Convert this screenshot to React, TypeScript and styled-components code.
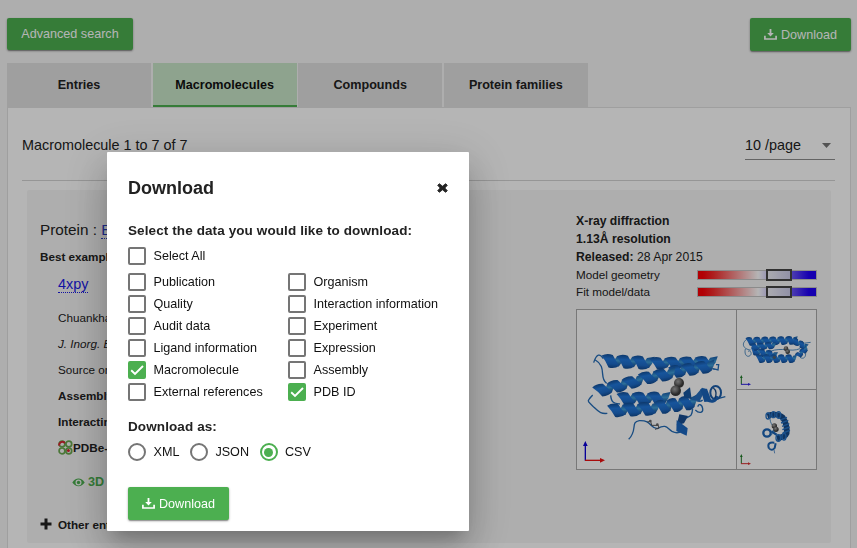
import React from 'react';
import styled, { createGlobalStyle, css } from 'styled-components';

const GlobalStyle = createGlobalStyle`
  * { box-sizing: border-box; }
  body {
    margin: 0;
    background: #f6f6f6;
    color: #222;
    font-family: "Liberation Sans", Arial, sans-serif;
    font-size: 12.6px;
    overflow: hidden;
  }
`;

const Page = styled.main`
  height: 548px;
  padding: 18px 6px 0 7px;
  overflow: hidden;
`;

const Toolbar = styled.header`
  display: flex;
  justify-content: space-between;
  align-items: flex-start;
  height: 45px;
`;

const Button = styled.button<{ $height?: number; $width: number }>`
  display: inline-flex;
  align-items: center;
  justify-content: center;
  gap: 4px;
  width: ${p => p.$width}px;
  height: ${p => p.$height ?? 33}px;
  padding: 0;
  border: 0;
  border-radius: 2px;
  background: #4caf50;
  color: #fff;
  font: 12.6px "Liberation Sans", Arial, sans-serif;
  white-space: nowrap;
  box-shadow: 0 2px 1px -1px rgba(0, 0, 0, 0.2), 0 1px 2px rgba(0, 0, 0, 0.24), 0 1px 3px rgba(0, 0, 0, 0.14);
`;

const Tabs = styled.nav`
  display: flex;
  gap: 1.6px;
  height: 44px;
`;

const Tab = styled.a<{ $active?: boolean }>`
  display: flex;
  align-items: center;
  justify-content: center;
  width: 144px;
  background: #e1e1e1;
  font-weight: bold;
  ${p => p.$active && css`
    background: #c8e6c9;
    color: #111;
    box-shadow: inset 0 -2px #4caf50;
  `}
`;

const Panel = styled.section`
  height: 460px;
  padding: 0 15px 0 14px;
  border: 1px solid #e1e1e1;
  background: #fff;
`;

const ResultsBar = styled.div`
  display: flex;
  justify-content: space-between;
  height: 73px;
  padding-top: 23px;
  border-bottom: 1px solid #d3d3d3;
  font-size: 14.4px;
  line-height: 29px;
`;

const PageSize = styled.div`
  display: flex;
  align-items: center;
  justify-content: space-between;
  width: 90px;
  height: 29px;
  padding-right: 4px;
  border-bottom: 1px solid #8e8e8e;
`;

const Card = styled.article`
  display: flex;
  justify-content: space-between;
  height: 353px;
  margin: 9px 4px 0 5px;
  padding: 22px 14px 0 13px;
  border-radius: 2px;
  background: #f6f6f6;
`;

const Summary = styled.div`
  width: 420px;
  padding-top: 4px;
  font-size: 11.7px;
`;

const Heading = styled.div`
  height: 27px;
  font-size: 15.3px;
  line-height: 28px;
`;

const Link = styled.a`
  color: #2a3ec2;
  border-bottom: 1px dotted currentColor;
`;

const EntryLink = styled.div`
  height: 35px;
  padding-left: 18px;
  font-size: 14.4px;
  line-height: 30px;
  ${Link} { color: #1a1ae6; }
`;

const Line = styled.div<{ $bold?: boolean; $italic?: boolean; $indent?: number }>`
  display: flex;
  align-items: center;
  height: 26px;
  padding-left: ${p => p.$indent ?? 18}px;
  font-weight: ${p => (p.$bold ? 'bold' : 'normal')};
  font-style: ${p => (p.$italic ? 'italic' : 'normal')};
  white-space: pre;
`;

const ViewerLink = styled(Line)`
  gap: 3px;
  margin-top: 9px;
  color: #4caf50;
  font-size: 12.6px;
`;

const OtherEntries = styled(Line)`
  gap: 6px;
  margin-top: 16px;
`;

const Details = styled.aside`
  width: 241px;
  font-size: 12.2px;
`;

const Fact = styled.div`
  line-height: 18px;
`;

const Metric = styled.div`
  display: flex;
  align-items: center;
  justify-content: space-between;
  height: 17px;
  font-size: 11.7px;
`;

const Scale = styled.div`
  position: relative;
  width: 120px;
  height: 10px;
  border: 1px solid #c4c4c4;
  background: linear-gradient(90deg, #fb0007 0%, #fb0007 4%, #f52c2c 13%, #fff 51%, #2000f8 94%);
`;

const ScaleMarker = styled.span`
  position: absolute;
  top: -2px;
  left: 68px;
  width: 26px;
  height: 12px;
  border: 2px solid #454545;
  background: linear-gradient(90deg, #f0f0f8, #cdcdeb);
`;

const Gallery = styled.div`
  display: grid;
  grid-template: 79px 79px / 159px 79px;
  gap: 1px;
  width: 241px;
  height: 161px;
  margin-top: 9px;
  border: 1px solid #a9a9a9;
  background: #a9a9a9;
`;

const MainView = styled.div`
  grid-row: span 2;
  background: #fff;
  svg { display: block; }
`;

const SideView = styled.div`
  background: #fff;
  svg { display: block; }
`;

const Backdrop = styled.div`
  position: fixed;
  inset: 0;
  padding: 152px 0 0 107px;
  background: rgba(0, 0, 0, 0.29);
`;

const Dialog = styled.section`
  width: 362px;
  height: 379px;
  padding: 20px 21px 0;
  border-radius: 1px;
  background: #fff;
  box-shadow: 0 11px 15px -7px rgba(0, 0, 0, 0.2), 0 24px 38px 3px rgba(0, 0, 0, 0.14), 0 9px 46px 8px rgba(0, 0, 0, 0.12);
`;

const DialogHeader = styled.div`
  display: flex;
  align-items: center;
  justify-content: space-between;
  height: 32px;
`;

const DialogTitle = styled.h2`
  margin: 0;
  font-size: 18px;
`;

const Prompt = styled.h3<{ $top: number }>`
  margin: ${p => p.$top}px 0 0;
  font-size: 13.5px;
  letter-spacing: 0.1px;
  line-height: 20px;
`;

const Option = styled.label`
  display: flex;
  align-items: center;
  gap: 7.5px;
  height: 21.9px;
  color: #111;
  white-space: nowrap;
`;

const AllOption = styled(Option)`
  margin: 4px 0 4.5px;
`;

const OptionGrid = styled.div`
  display: grid;
  grid-template-columns: 160px 1fr;
`;

const Checkbox = styled.span<{ $checked?: boolean }>`
  display: flex;
  width: 18px;
  height: 18px;
  border: 2px solid ${p => (p.$checked ? '#4caf50' : '#757575')};
  border-radius: 2px;
  background: ${p => (p.$checked ? '#4caf50' : '#fff')};
`;

const RadioRow = styled.div`
  display: flex;
  margin-top: 4px;
  gap: 10.5px;
`;

const Radio = styled.span<{ $checked?: boolean }>`
  display: flex;
  align-items: center;
  justify-content: center;
  width: 18px;
  height: 18px;
  border: 2px solid ${p => (p.$checked ? '#4caf50' : '#757575')};
  border-radius: 50%;
  &::after {
    content: "";
    width: 9px;
    height: 9px;
    border-radius: 50%;
    background: ${p => (p.$checked ? '#4caf50' : 'transparent')};
  }
`;

const Actions = styled.div`
  margin-top: 24px;
`;

function DownloadIcon() {
  return (
    <svg width="13" height="12" viewBox="0 0 13 12">
      <path d="M5.600 0h1.800v3.900h2.400L6.500 7.600 3.200 3.900h2.400z" fill="currentColor" />
      <path d="M.9 6.800v3.200h11.200v-3.200" fill="none" stroke="currentColor" strokeWidth="1.700" />
    </svg>
  );
}

function CloseIcon() {
  return (
    <svg width="11" height="11" viewBox="0 0 11 11">
      <path d="M2.300 .7 5.500 3.200 8.700 .7 10.300 2.300 7.800 5 10.300 7.700 8.700 9.300 5.500 6.800 2.300 9.300 .7 7.700 3.200 5 .7 2.300z" fill="#222" stroke="#222" strokeWidth=".9" strokeLinejoin="round" />
    </svg>
  );
}

function EyeIcon() {
  return (
    <svg width="13" height="9" viewBox="0 0 13 9">
      <path fillRule="evenodd" d="M.3 4.500C3.500-.7 9.500-.7 12.700 4.500 9.500 9.400 3.500 9.400.3 4.500zM6.500 1.500a3 3 0 1 0 0 6 3 3 0 0 0 0-6z" fill="#4caf50" />
      <circle cx="6.500" cy="4.500" r="1.700" fill="#4caf50" />
    </svg>
  );
}

function KbLogo() {
  return (
    <svg width="15" height="15" viewBox="0 0 15 15" fill="none" strokeWidth="1.700">
      <circle cx="4" cy="4" r="2.900" stroke="#6aa84f" />
      <path d="M1.300 5.600A3.100 3.100 0 0 1 6.900 3.200" stroke="#d92332" strokeWidth="2" />
      <circle cx="10.800" cy="4" r="2.900" stroke="#6aa84f" />
      <circle cx="4" cy="10.900" r="2.900" stroke="#6aa84f" />
      <circle cx="10.800" cy="10.900" r="2.900" stroke="#6aa84f" />
      <circle cx="10.400" cy="10.500" r="1.500" fill="#d92332" />
    </svg>
  );
}

interface HelixProps {
  from: [number, number];
  to: [number, number];
  turns: number;
  amp: number;
}

/* A ribbon helix: broad front strands joined by shorter, lighter rear strands. */
function Helix({ from, to, turns, amp }: HelixProps) {
  const dx = to[0] - from[0];
  const dy = to[1] - from[1];
  const length = Math.hypot(dx, dy);
  const angle = (Math.atan2(dy, dx) * 180) / Math.PI;
  const p = length / turns;
  const items = Array.from({ length: turns }, (_, i) => i * p);
  return (
    <g transform={`translate(${from[0]} ${from[1]}) rotate(${angle})`}>
      {items.map(x => (
        <path
          key={`b${x}`}
          d={`M${x + p * 0.45} ${amp * 0.5} L${x + p * 0.8} ${-amp * 0.75} L${x + p * 1.3} ${-amp} L${x + p * 1.15} ${amp * 0.1} L${x + p * 0.95} ${amp * 0.8}z`}
          fill="url(#rear)"
        />
      ))}
      {items.map(x => (
        <path
          key={`f${x}`}
          d={`M${x - p * 0.22} ${-amp * 0.8} Q${x + p * 0.15} ${-amp * 1.3} ${x + p * 0.52} ${-amp * 0.95} Q${x + p * 0.72} ${-amp * 0.1} ${x + p * 0.99} ${amp * 0.7} Q${x + p * 0.7} ${amp * 1.25} ${x + p * 0.28} ${amp * 1.05} Q${x + p * 0.1} ${amp * 0.1} ${x - p * 0.22} ${-amp * 0.8}z`}
          fill="url(#front)"
        />
      ))}
    </g>
  );
}

function Shades() {
  return (
    <defs>
      <linearGradient id="rear" x1="0" y1="0" x2="0" y2="1">
        <stop offset="0" stopColor="#1558a5" />
        <stop offset=".5" stopColor="#3f9cd8" />
        <stop offset="1" stopColor="#0f458c" />
      </linearGradient>
      <linearGradient id="front" x1="0" y1="0" x2="0" y2="1">
        <stop offset="0" stopColor="#134f97" />
        <stop offset=".35" stopColor="#2178dc" />
        <stop offset=".7" stopColor="#1d6bc8" />
        <stop offset="1" stopColor="#124b90" />
      </linearGradient>
      <radialGradient id="metal" cx=".4" cy=".35">
        <stop offset="0" stopColor="#a2a2a2" />
        <stop offset=".55" stopColor="#707070" />
        <stop offset="1" stopColor="#3c3c3c" />
      </radialGradient>
    </defs>
  );
}

function FrontStructure() {
  return (
    <svg width="159" height="159" viewBox="21 30 477 477">
      <Shades />
      <g fill="none" stroke="#256db8" strokeWidth="4">
        <path d="M71 188C80 160 90 160 100 176M76 180C112 200 86 235 110 250M68 285C48 308 52 300 72 322C88 338 96 342 112 340M122 286C124 310 134 310 150 312M410 198Q428 208 434 208M438 194l8 0-2 16-15-4" />
        <path d="M176 418C204 390 180 366 208 362C245 360 240 386 262 386C290 370 292 386 306 394C322 402 330 398 336 390" />
        <path d="M368 326C366 348 362 348 348 354M372 300Q390 308 398 300M376 330c12 12 24 8 22-4-2-14-14-16-14-6M444 296l22-6" />
      </g>
      <Helix from={[104, 182]} to={[262, 190]} turns={3.5} amp={19} />
      <Helix from={[248, 190]} to={[430, 186]} turns={4} amp={17} />
      <Helix from={[150, 296]} to={[288, 294]} turns={3} amp={18} />
      <Helix from={[305, 216]} to={[424, 198]} turns={3} amp={18} />
      <Helix from={[80, 274]} to={[212, 240]} turns={3} amp={18} />
      <Helix from={[216, 236]} to={[306, 220]} turns={2} amp={18} />
      <Helix from={[122, 332]} to={[280, 324]} turns={3.5} amp={19} />
      <Helix from={[264, 322]} to={[372, 306]} turns={3} amp={20} />
      <path d="M340 278l20-16 5 36-22-6z" fill="#17569f" />
      <path d="M365 300l24 4 18-38-11-3-20 24z" fill="#276fbe" />
      <path d="M391 268l20-2 14 38-22 2z" fill="#1b65bb" />
      <ellipse cx="437" cy="278" rx="16" ry="20" fill="none" stroke="#1b5daa" strokeWidth="6" />
      <path d="M411 298c14 10 26 6 30-10" fill="none" stroke="#1b65bb" strokeWidth="10" />
      <path d="M430 264c10 6 10 22 4 32" fill="none" stroke="#174a88" strokeWidth="4" />
      <path d="M328 343l26 5-12 22-22 6z" fill="#174d91" />
      <path d="M320 360l33 25-3 22-31-14z" fill="#1c68c1" />
      <path d="M232 366l10-2 3 12 20 0 2 8-12 4" fill="none" stroke="#555" strokeWidth="3" />
      <circle cx="241" cy="363" r="4" fill="#666" />
      <circle cx="262" cy="374" r="4" fill="#666" />
      <circle cx="327" cy="249" r="15" fill="url(#metal)" />
      <circle cx="317" cy="272" r="16" fill="url(#metal)" />
      <path d="M46 482V436" stroke="#0c00d8" strokeWidth="4" />
      <path d="M39 438l7-15 7 15z" fill="#0c00d8" />
      <path d="M45 481H92" stroke="#ed1010" strokeWidth="4" />
      <path d="M90 474l15 7-15 7z" fill="#ed1010" />
    </svg>
  );
}

function TopStructure() {
  return (
    <svg width="79" height="79" viewBox="21 30 237 237">
      <g fill="none" stroke="#367bb8" strokeWidth="2.500">
        <path d="M54 115C30 130 40 148 62 150M46 147c-4 18 6 26 14 20s0-20-6-12M120 154C160 140 180 158 210 146M220 130l22-3M226 154c4 18-6 25-16 18" />
      </g>
      <Helix from={[66, 152]} to={[135, 166]} turns={3} amp={11} />
      <Helix from={[82, 176]} to={[194, 176]} turns={5} amp={12} />
      <Helix from={[52, 124]} to={[196, 121]} turns={6} amp={12} />
      <Helix from={[66, 142]} to={[132, 136]} turns={3} amp={10} />
      <Helix from={[191, 122]} to={[226, 140]} turns={2} amp={10} />
      <Helix from={[202, 168]} to={[229, 146]} turns={2} amp={9} />
      <circle cx="168" cy="146" r="7" fill="url(#metal)" />
      <circle cx="173" cy="155" r="7" fill="url(#metal)" />
      <circle cx="133" cy="172" r="5" fill="#53606a" />
      <path d="M34 253V231" stroke="#1d7a26" strokeWidth="3" />
      <path d="M30 234l4-9 4 9z" fill="#1d7a26" />
      <path d="M33 253H55" stroke="#3022e6" strokeWidth="3" />
      <path d="M54 249l9 4-9 4z" fill="#3022e6" />
    </svg>
  );
}

function SideStructure() {
  return (
    <svg width="79" height="79" viewBox="21 270 237 237">
      <path d="M121 350C116 375 138 376 132 402M124 406l8-18" fill="none" stroke="#367bb8" strokeWidth="2.500" />
      <g fill="none" stroke="#164a88" strokeWidth="17">
        <path d="M112 347Q142 338 158 352Q173 374 170 400Q166 411 141 415" />
      </g>
      <g fill="none" stroke="#2873c4" strokeWidth="4">
        <ellipse cx="114" cy="348" rx="6" ry="9" />
        <ellipse cx="130" cy="344" rx="5" ry="9" />
        <ellipse cx="146" cy="345" rx="6" ry="10" />
        <path d="M151 360l20-8M153 369l22-8M156 379l22-8M157 389l22-8M158 399l22-8" />
        <ellipse cx="145" cy="414" rx="7" ry="10" />
        <ellipse cx="162" cy="410" rx="6" ry="10" />
      </g>
      <g fill="none" stroke="#1d65b5">
        <circle cx="111" cy="399" r="11" strokeWidth="7" />
        <path d="M124 394l16 10" strokeWidth="7" />
        <path d="M117 446c-6-16 2-20 16-18M118 446q8 8 16-2l3-14" strokeWidth="6" />
        <path d="M132 449l2 11" strokeWidth="2" />
      </g>
      <circle cx="133" cy="378" r="8" fill="url(#metal)" />
      <circle cx="138" cy="388" r="8" fill="url(#metal)" />
      <path d="M34 491V469" stroke="#1d7a26" strokeWidth="3" />
      <path d="M30 471l4-9 4 9z" fill="#1d7a26" />
      <path d="M33 491H55" stroke="#d83030" strokeWidth="3" />
      <path d="M54 487l9 4-9 4z" fill="#d83030" />
    </svg>
  );
}

const options: { label: string; checked?: boolean }[] = [
  { label: 'Publication' },
  { label: 'Organism' },
  { label: 'Quality' },
  { label: 'Interaction information' },
  { label: 'Audit data' },
  { label: 'Experiment' },
  { label: 'Ligand information' },
  { label: 'Expression' },
  { label: 'Macromolecule', checked: true },
  { label: 'Assembly' },
  { label: 'External references' },
  { label: 'PDB ID', checked: true },
];

function CheckboxMark({ checked }: { checked?: boolean }) {
  return (
    <Checkbox $checked={checked}>
      {checked && (
        <svg width="14" height="14" viewBox="0 0 14 14">
          <path d="M1.200 7.300 5 11 13 3" fill="none" stroke="#fff" strokeWidth="1.900" />
        </svg>
      )}
    </Checkbox>
  );
}

export default function App() {
  return (
    <>
      <GlobalStyle />
      <Page>
        <Toolbar>
          <Button $width={126} $height={32}>Advanced search</Button>
          <Button $width={101}><DownloadIcon />Download</Button>
        </Toolbar>
        <Tabs>
          <Tab>Entries</Tab>
          <Tab $active>Macromolecules</Tab>
          <Tab>Compounds</Tab>
          <Tab>Protein families</Tab>
        </Tabs>
        <Panel>
          <ResultsBar>
            <span>Macromolecule 1 to 7 of 7</span>
            <PageSize>
              10 /page
              <svg width="9" height="5" viewBox="0 0 9 5"><path d="M0 0h9L4.500 5z" fill="#757575" /></svg>
            </PageSize>
          </ResultsBar>
          <Card>
            <Summary>
              <Heading>Protein : <Link>Bfr</Link></Heading>
              <Line $bold $indent={0}>Best example</Line>
              <EntryLink><Link>4xpy</Link></EntryLink>
              <Line>Chuankhayan P</Line>
              <Line $italic>J. Inorg. Biochem.</Line>
              <Line>Source organism</Line>
              <Line $bold>Assembly</Line>
              <Line $bold>Interacting</Line>
              <Line $bold><KbLogo />PDBe-KB</Line>
              <ViewerLink $bold $indent={32}><EyeIcon />3D</ViewerLink>
              <OtherEntries $bold $indent={0}>
                <svg width="12" height="12" viewBox="0 0 12 12"><path d="M6 .5v11M.5 6h11" stroke="#222" strokeWidth="3" /></svg>
                Other entries (6)
              </OtherEntries>
            </Summary>
            <Details>
              <Fact><b>X-ray diffraction</b></Fact>
              <Fact><b>1.13Å resolution</b></Fact>
              <Fact><b>Released:</b> 28 Apr 2015</Fact>
              <Metric>Model geometry<Scale><ScaleMarker /></Scale></Metric>
              <Metric>Fit model/data<Scale><ScaleMarker /></Scale></Metric>
              <Gallery>
                <MainView><FrontStructure /></MainView>
                <SideView><TopStructure /></SideView>
                <SideView><SideStructure /></SideView>
              </Gallery>
            </Details>
          </Card>
        </Panel>
      </Page>
      <Backdrop>
        <Dialog role="dialog" aria-label="Download">
          <DialogHeader>
            <DialogTitle>Download</DialogTitle>
            <CloseIcon />
          </DialogHeader>
          <Prompt $top={17}>Select the data you would like to download:</Prompt>
          <AllOption><CheckboxMark />Select All</AllOption>
          <OptionGrid>
            {options.map(o => (
              <Option key={o.label}><CheckboxMark checked={o.checked} />{o.label}</Option>
            ))}
          </OptionGrid>
          <Prompt $top={14.5}>Download as:</Prompt>
          <RadioRow>
            <Option><Radio />XML</Option>
            <Option><Radio />JSON</Option>
            <Option><Radio $checked />CSV</Option>
          </RadioRow>
          <Actions>
            <Button $width={101}><DownloadIcon />Download</Button>
          </Actions>
        </Dialog>
      </Backdrop>
    </>
  );
}
